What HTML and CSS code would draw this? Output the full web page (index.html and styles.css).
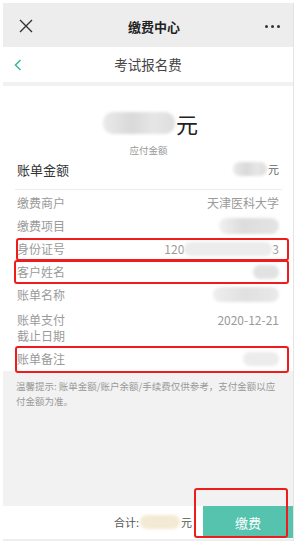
FILE: index.html
```html
<!DOCTYPE html>
<html lang="zh">
<head>
<meta charset="utf-8">
<link rel="stylesheet" href="styles.css">
</head>
<body>
<div class="phone">
  <header class="topbar">
    <svg class="close" width="14" height="14" viewBox="0 0 14 14"><path d="M1 1L13 13M13 1L1 13" stroke="#333" stroke-width="1.4" fill="none"/></svg>
    <div class="title">缴费中心</div>
    <div class="more"><span></span><span></span><span></span></div>
  </header>
  <nav class="navbar">
    <svg class="back" width="8" height="12" viewBox="0 0 8 12"><path d="M6.5 1L1.5 6L6.5 11" stroke="#3fb8a0" stroke-width="1.6" fill="none"/></svg>
    <div class="navtitle">考试报名费</div>
  </nav>
  <div class="sep"></div>
  <main class="bill">
    <div class="amount">
      <span class="blur big"></span><span class="yuan">元</span>
    </div>
    <div class="amount-label">应付金额</div>
    <div class="row total">
      <span class="label">账单金额</span>
      <span class="value"><span class="blur small"></span>元</span>
    </div>
    <div class="divider"></div>
    <div class="row">
      <span class="label">缴费商户</span>
      <span class="value">天津医科大学</span>
    </div>
    <div class="row">
      <span class="label">缴费项目</span>
      <span class="value"><span class="blur item"></span></span>
    </div>
    <div class="row marked m1">
      <span class="label">身份证号</span>
      <span class="value">120<span class="blur id"></span>3</span>
    </div>
    <div class="row marked m2">
      <span class="label">客户姓名</span>
      <span class="value"><span class="blur name"></span></span>
    </div>
    <div class="row">
      <span class="label">账单名称</span>
      <span class="value"><span class="blur billname"></span></span>
    </div>
    <div class="row two">
      <span class="label">账单支付<br>截止日期</span>
      <span class="value">2020-12-21</span>
    </div>
    <div class="row marked m3">
      <span class="label">账单备注</span>
      <span class="value"><span class="blur note"></span></span>
    </div>
  </main>
  <section class="tips">温馨提示: 账单金额/账户余额/手续费仅供参考，支付金额以应付金额为准。</section>
  <footer class="footer">
    <span class="sum">合计:</span><span class="blur sumv"></span><span class="sum">元</span>
    <button class="pay">缴费</button>
    <div class="paymark"></div>
  </footer>
  <div class="bottomline"></div>
</div>
</body>
</html>
```

FILE: styles.css
```css
* { box-sizing: border-box; }
html, body { margin: 0; padding: 0; background: #fff; }
body {
  width: 301px;
  height: 553px;
  overflow: hidden;
  font-family: "Noto Sans CJK SC", "Noto Sans", sans-serif;
}
.phone {
  margin: 3px 0 0 3px;
  width: 291px;
  border-right: 1px solid #e4e4e4;
  position: relative;
}
.topbar {
  height: 44px;
  background: #ededed;
  display: flex;
  align-items: center;
  justify-content: space-between;
  padding: 0 13px 0 16px;
}
.close { display: block; margin-top: 2px; }
.title {
  font-size: 13px;
  font-weight: 700;
  color: #222;
  margin-left: 10px;
  margin-top: 2px;
}
.more { display: flex; gap: 3px; margin-top: 2px; }
.more span { width: 3px; height: 3px; background: #333; border-radius: 50%; }
.navbar {
  height: 35px;
  background: #fff;
  display: flex;
  align-items: center;
  position: relative;
  padding-left: 11px;
}
.navtitle {
  position: absolute;
  left: 0; right: 0;
  text-align: center;
  font-size: 13.5px;
  color: #444;
  top: 7px;
}
.back { display: block; }
.sep { height: 4px; background: #f1f1f1; }
.bill { background: #fff; padding: 24px 10px 1px 11px; }
.amount {
  display: flex;
  justify-content: center;
  align-items: center;
  height: 26px;
  padding-left: 4px;
}
.yuan { font-size: 22px; color: #222; line-height: 26px; margin-left: 1px; }
.amount-label {
  text-align: center;
  font-size: 9.5px;
  color: #999;
  margin-top: 7px;
  line-height: 14px;
}
.blur {
  display: inline-block;
  background: linear-gradient(90deg, #eaeaea, #d9d9d9 40%, #e6e6e6 70%, #dedede);
  border-radius: 10px;
  filter: blur(1.5px);
}
.blur.big { width: 72px; height: 22px; }
.blur.small { width: 34px; height: 14px; margin-right: 1px; vertical-align: middle; }
.blur.item { width: 60px; height: 16px; background: linear-gradient(90deg,#f0f0f0,#dcdcdc 40%,#e4e4e4); }
.blur.id { width: 88px; height: 14px; vertical-align: middle; background: #ececec; }
.blur.name { width: 26px; height: 14px; background: #e2e2e2; }
.blur.billname { width: 66px; height: 15px; background: linear-gradient(90deg,#eee,#e0e0e0 50%,#eaeaea); }
.blur.note { width: 36px; height: 14px; background: #ececec; }
.row {
  display: flex;
  justify-content: space-between;
  align-items: center;
  height: 23px;
  font-size: 12px;
  color: #9a9a9a;
  padding: 0 4px 0 3px;
  position: relative;
}
.row .value { display: flex; align-items: center; }
.row.total { color: #333; font-size: 13px; height: 24px; margin-top: 0; }
.row.total .value { font-size: 11px; color: #666; }
.divider { height: 1px; background: #ececec; margin: 8px 1px 1px; }
.row.two { height: 41px; align-items: flex-start; padding-top: 6px; line-height: 16px; }
.row.two .value { line-height: 16px; }
.row.marked::after {
  content: "";
  position: absolute;
  border: 2px solid #ee1c1c;
  border-radius: 3px;
}
.m1::after { left: 2px; right: -6px; top: 1px; bottom: -1px; }
.m2::after { left: 0; right: -6px; top: 0; bottom: -1px; }
.m3::after { left: 1px; right: -6px; top: -1px; bottom: -3px; }
.tips {
  background: #f2f2f2;
  height: 135px;
  padding: 8px 12px 0 13px;
  font-size: 9.5px;
  line-height: 15px;
  color: #999;
  margin-top: 0;
}
.footer {
  height: 32px;
  background: #fff;
  display: flex;
  align-items: center;
  justify-content: flex-end;
  position: relative;
}
.sum { font-size: 11px; color: #555; }
.blur.sumv { width: 40px; height: 14px; background: #f3ead3; margin: 0 1px; }
.pay {
  width: 90px;
  height: 32px;
  margin-left: 11px;
  border: 0;
  background: #55c3ad;
  color: #fff;
  font-family: inherit;
  font-size: 13px;
  padding: 0;
}
.paymark {
  position: absolute;
  right: 5px;
  width: 94px;
  top: -18px;
  height: 50px;
  border: 2px solid #ee1c1c;
  border-radius: 3px;
}
.bottomline { height: 2px; background: #eee; margin-top: 1px; }
```
